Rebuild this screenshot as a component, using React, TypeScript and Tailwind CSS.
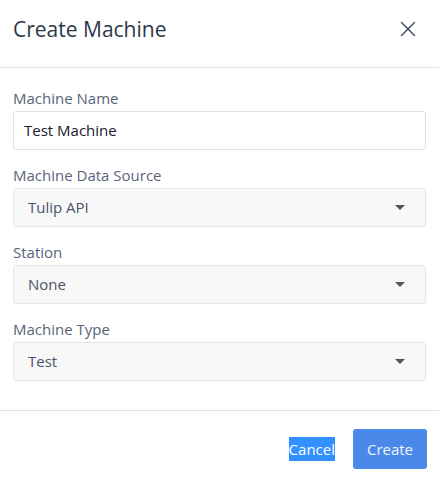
import { X } from 'lucide-react';

const fields = [
  { label: 'Machine Data Source', value: 'Tulip API' },
  { label: 'Station', value: 'None' },
  { label: 'Machine Type', value: 'Test' },
];

function Caret() {
  return (
    <svg width="10" height="5" viewBox="0 0 10 5" className="shrink-0">
      <path d="M0 0 H10 L5 5 Z" fill="#4a5568" />
    </svg>
  );
}

export default function App() {
  return (
    <div className="w-[439px] h-[479px] overflow-hidden bg-white font-['Open_Sans',sans-serif]">
      <div className="h-[68px] flex items-center justify-between pl-[13px] pr-[18px] pb-[9px] border-b border-[#e2e2e2]">
        <h2 className="text-[21px] leading-none text-[#2d3748]">Create Machine</h2>
        <X size={26} strokeWidth={1.4} className="text-[#4a5568]" />
      </div>

      <div className="px-[13px] pt-[19px] pb-[29px] flex flex-col gap-[14px]">
        <div>
          <label className="block text-[15px] leading-[22px] mb-[2px] text-[#5a6478]">Machine Name</label>
          <div className="h-[39px] flex items-center px-[10px] border border-[#dcdfe3] rounded-[3px] bg-white text-[15px] text-[#1a202c]">
            Test Machine
          </div>
        </div>
        {fields.map(f => (
          <div key={f.label}>
            <label className="block text-[15px] leading-[22px] mb-[2px] text-[#5a6478]">{f.label}</label>
            <div className="h-[39px] flex items-center justify-between pl-[14px] pr-[20px] border border-[#e4e6e9] rounded-[3px] bg-[#f8f8f8] text-[15px] text-[#4a5568]">
              <span>{f.value}</span>
              <Caret />
            </div>
          </div>
        ))}
      </div>

      <div className="border-t border-[#e2e2e2] flex items-center justify-end gap-[18px] px-[12px] pt-[18px]">
        <span className="text-[15px] leading-[24px] bg-[#3390ff] text-white">Cancel</span>
        <button className="w-[74px] h-[40px] rounded-[3px] bg-[#4a89ea] text-[15px] text-[#eef4fd]">Create</button>
      </div>
    </div>
  );
}
